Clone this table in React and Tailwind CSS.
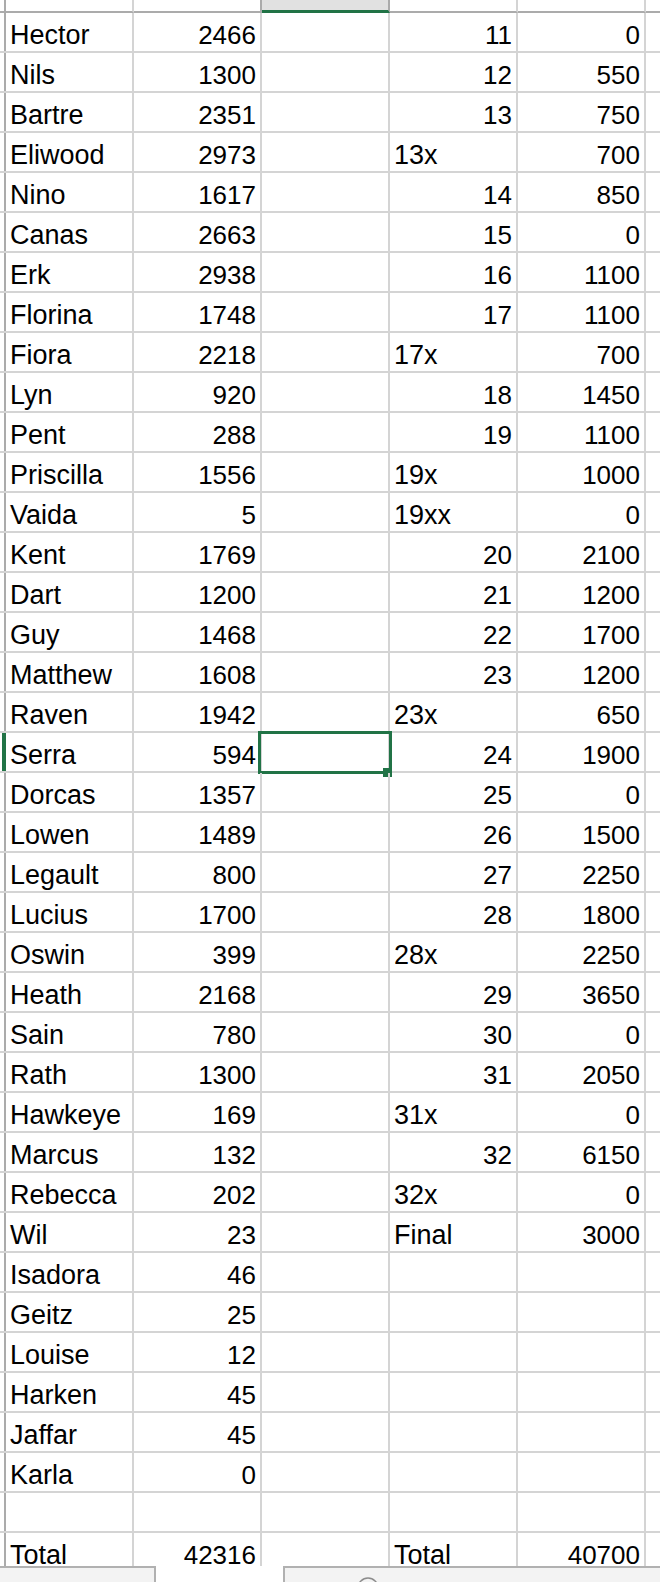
import React from 'react';

const rows = [
  ['Hector', '2466', '11', '0'],
  ['Nils', '1300', '12', '550'],
  ['Bartre', '2351', '13', '750'],
  ['Eliwood', '2973', '13x', '700'],
  ['Nino', '1617', '14', '850'],
  ['Canas', '2663', '15', '0'],
  ['Erk', '2938', '16', '1100'],
  ['Florina', '1748', '17', '1100'],
  ['Fiora', '2218', '17x', '700'],
  ['Lyn', '920', '18', '1450'],
  ['Pent', '288', '19', '1100'],
  ['Priscilla', '1556', '19x', '1000'],
  ['Vaida', '5', '19xx', '0'],
  ['Kent', '1769', '20', '2100'],
  ['Dart', '1200', '21', '1200'],
  ['Guy', '1468', '22', '1700'],
  ['Matthew', '1608', '23', '1200'],
  ['Raven', '1942', '23x', '650'],
  ['Serra', '594', '24', '1900'],
  ['Dorcas', '1357', '25', '0'],
  ['Lowen', '1489', '26', '1500'],
  ['Legault', '800', '27', '2250'],
  ['Lucius', '1700', '28', '1800'],
  ['Oswin', '399', '28x', '2250'],
  ['Heath', '2168', '29', '3650'],
  ['Sain', '780', '30', '0'],
  ['Rath', '1300', '31', '2050'],
  ['Hawkeye', '169', '31x', '0'],
  ['Marcus', '132', '32', '6150'],
  ['Rebecca', '202', '32x', '0'],
  ['Wil', '23', 'Final', '3000'],
  ['Isadora', '46', '', ''],
  ['Geitz', '25', '', ''],
  ['Louise', '12', '', ''],
  ['Harken', '45', '', ''],
  ['Jaffar', '45', '', ''],
  ['Karla', '0', '', ''],
  ['', '', '', ''],
  ['Total', '42316', 'Total', '40700'],
];

const SELECTED = 18;

function Cell({ value, selected }) {
  const numeric = value !== '' && /^\d+$/.test(value);
  return (
    <div
      className={`relative w-[128px] shrink-0 border-r-2 border-[#d4d4d4] flex items-end ${
        numeric ? 'justify-end pr-[4px] pb-[3px] text-[26px]' : 'justify-start pl-[4px] pb-[2px] text-[27px]'
      }`}
    >
      <span className="leading-none">{value}</span>
      {selected && (
        <>
          <div className="absolute left-[-4px] top-[-2px] w-[134px] h-[43px] border-[3px] border-[#217346]" />
          <div className="absolute left-[121px] top-[35px] w-[9px] h-[9px] bg-[#217346]" />
        </>
      )}
    </div>
  );
}

export default function App() {
  const letters = ['A', 'B', 'C', 'D', 'E'];

  return (
    <div
      className="w-[660px] h-[1582px] bg-white flex flex-col overflow-hidden text-black text-[26px]"
      style={{ fontFamily: '"Liberation Sans", Arial, sans-serif' }}
    >
      <div className="h-[1566px] overflow-hidden shrink-0">
        {/* column header, mostly scrolled out of view */}
        <div className="flex h-[13px]">
          <div className="w-[6px] shrink-0 border-r-2 border-b-2 border-[#ababab]" />
          {letters.map((l) =>
            l === 'C' ? (
              <div
                key={l}
                className="w-[128px] shrink-0 bg-[#e1e1e1] border-r-2 border-r-[#ababab] border-b-[3px] border-b-[#217346] flex items-end justify-center overflow-hidden text-[#217346]"
              >
                <span className="leading-none mb-[6px]">{l}</span>
              </div>
            ) : (
              <div
                key={l}
                className={`w-[128px] shrink-0 border-r-2 ${
                  l === 'B' ? 'border-r-[#ababab]' : 'border-r-[#d4d4d4]'
                } border-b-2 border-b-[#ababab] flex items-end justify-center overflow-hidden text-[#444444]`}
              >
                <span className="leading-none mb-[7px]">{l}</span>
              </div>
            )
          )}
          <div className="flex-1 border-b-2 border-[#ababab]" />
        </div>

        {rows.map((r, i) => (
          <div key={i} className="flex h-[40px] border-b-2 border-[#d4d4d4]">
            <div
              className={`w-[6px] shrink-0 ${
                i === SELECTED ? 'border-r-4 border-[#217346]' : 'border-r-2 border-[#ababab]'
              }`}
            />
            <Cell value={r[0]} />
            <Cell value={r[1]} />
            <Cell value="" selected={i === SELECTED} />
            <Cell value={r[2]} />
            <Cell value={r[3]} />
            <div className="flex-1" />
          </div>
        ))}
      </div>

      {/* sheet tab bar */}
      <div className="flex h-[16px] shrink-0">
        <div className="w-[156px] bg-[#f3f3f3] border-t-2 border-r-2 border-[#b1b1b1]" />
        <div className="w-[127px] bg-white" />
        <div className="flex-1 bg-[#f3f3f3] border-t-2 border-l-2 border-[#b1b1b1] overflow-hidden">
          <svg width="22" height="22" viewBox="0 0 22 22" className="ml-[72px] mt-[9px]">
            <circle cx="11" cy="11" r="10" fill="none" stroke="#8c8c8c" strokeWidth="1.5" />
          </svg>
        </div>
      </div>
    </div>
  );
}
